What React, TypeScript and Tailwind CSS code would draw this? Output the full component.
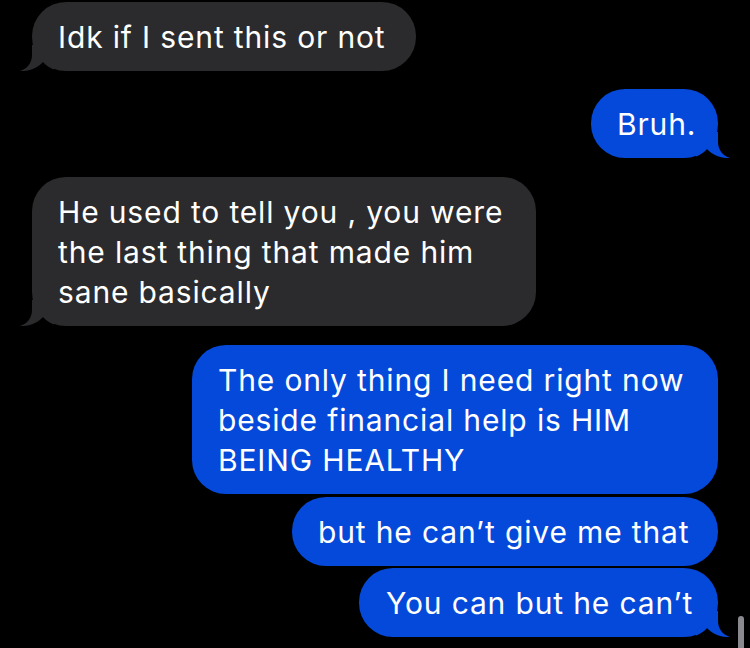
import React from "react";

const BLUE = "#0549db";
const GRAY = "#2b2b2d";

function Tail({ side, color }: { side: "left" | "right"; color: string }) {
  return (
    <svg
      width="34"
      height="26"
      viewBox="0 0 34 26"
      className={
        side === "right"
          ? "absolute bottom-0 right-[-12px]"
          : "absolute bottom-0 left-[-12px] -scale-x-100"
      }
    >
      <path
        d="M0 0 H22 V10 C22 18 27 24 34 26 C26 26.5 17 23.5 11 17 C8 20.5 4 23 0 24.5 Z"
        fill={color}
      />
    </svg>
  );
}

function Bubble({
  side,
  lines,
  width,
  tail,
  className = "",
}: {
  side: "left" | "right";
  lines: string[];
  width: number;
  tail?: boolean;
  className?: string;
}) {
  const color = side === "right" ? BLUE : GRAY;
  return (
    <div
      className={`relative rounded-[34px] py-[14.5px] pl-[26px] text-white text-[30px] leading-[40px] tracking-[0.85px] whitespace-nowrap ${
        side === "right" ? "self-end mr-[32px]" : "self-start ml-[32px]"
      } ${className}`}
      style={{ width, backgroundColor: color }}
    >
      {tail && <Tail side={side} color={color} />}
      <div className="relative">
        {lines.map((l, i) => (
          <div key={i}>{l}</div>
        ))}
      </div>
    </div>
  );
}

export default function App() {
  return (
    <div
      className="relative w-[750px] h-[648px] bg-black overflow-hidden flex flex-col pt-[2px]"
      style={{ fontFamily: "Inter, 'Noto Sans', sans-serif" }}
    >
      <Bubble side="left" width={384} tail lines={["Idk if I sent this or not"]} />
      <Bubble side="right" width={127} tail className="mt-[18px] pl-[24px]" lines={["Bruh."]} />
      <Bubble
        side="left"
        width={504}
        tail
        className="mt-[19px]"
        lines={["He used to tell you , you were", "the last thing that made him", "sane basically"]}
      />
      <Bubble
        side="right"
        width={526}
        className="mt-[19px]"
        lines={["The only thing I need right now", "beside financial help is HIM", "BEING HEALTHY"]}
      />
      <Bubble side="right" width={426} className="mt-[3px] pl-[25px]" lines={["but he can\u2019t give me that"]} />
      <Bubble side="right" width={359} tail className="mt-[2px] pl-[27px]" lines={["You can but he can\u2019t"]} />
      <div className="absolute left-[738px] top-[616px] w-[6px] h-[40px] rounded-full bg-[#8a8a8e]" />
    </div>
  );
}
